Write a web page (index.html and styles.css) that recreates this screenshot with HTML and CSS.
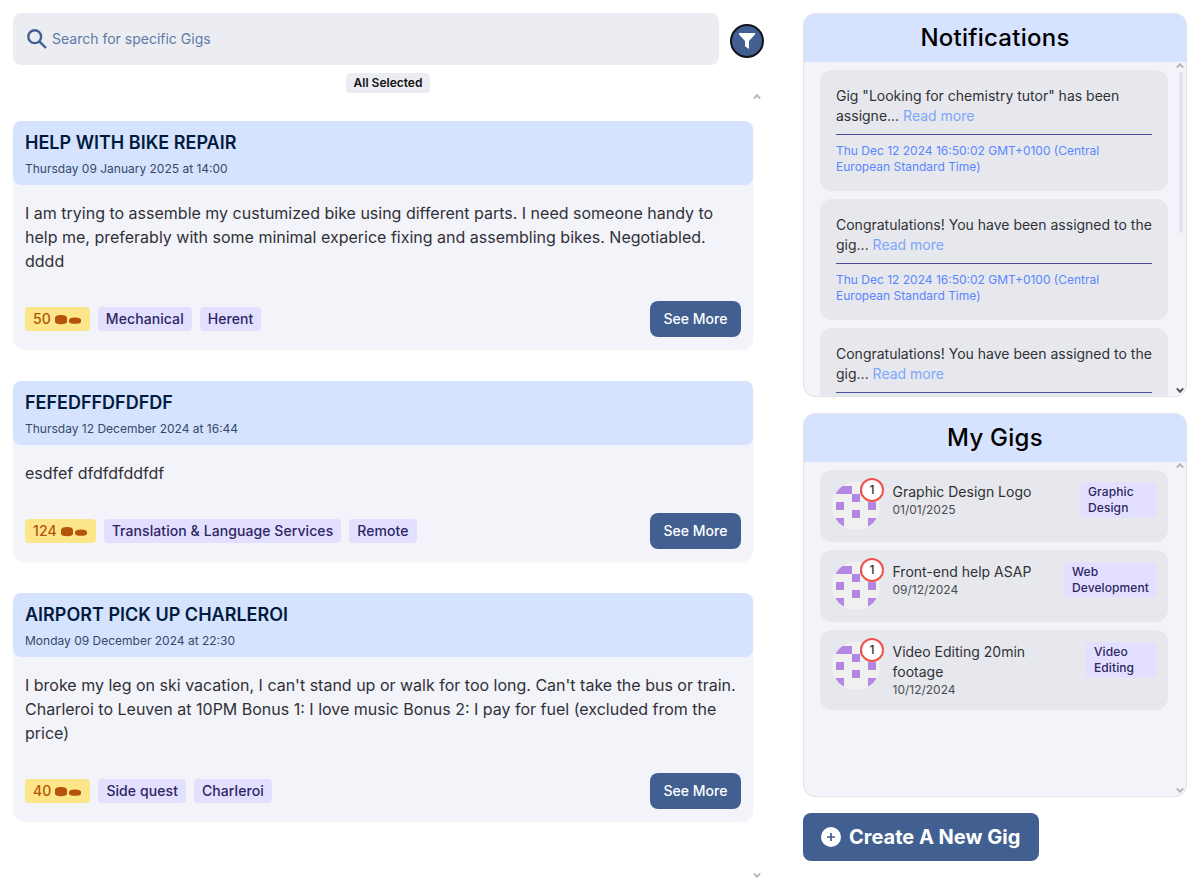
FILE: index.html
```html
<!DOCTYPE html>
<html lang="en">
<head>
<meta charset="utf-8">
<title>Gigs</title>
<link rel="stylesheet" href="styles.css">
</head>
<body>
<svg class="defs" aria-hidden="true">
  <symbol id="coins" viewBox="0 0 26 10">
    <path d="M0 3Q0 0 6 0T12 3V6.5Q12 9.3 6 9.3T0 6.5Z"/>
    <path d="M14 5.2Q14 2.6 20 2.6T26 5.2V6.2Q26 8.8 20 8.8T14 6.2Z"/>
  </symbol>
  <symbol id="avatar" viewBox="0 0 48 48">
    <clipPath id="round"><circle cx="24" cy="24" r="24"/></clipPath>
    <g clip-path="url(#round)">
      <path fill="#f0f0f0" d="M0 0H48V48H0Z"/>
      <path fill="#b388e3" d="M4 4H20V12H4ZM28 4H44V12H28ZM20 12H28V20H20ZM4 20H12V28H4ZM36 20H44V28H36ZM20 28H28V36H20ZM4 36H12V44H4ZM36 36H44V44H36Z"/>
    </g>
  </symbol>
  <symbol id="up" viewBox="0 0 8 7"><path d="M.8 5.6L4 2.2L7.2 5.6" fill="none" stroke="currentColor" stroke-width="2"/></symbol>
  <symbol id="down" viewBox="0 0 8 7"><path d="M.8 1.4L4 4.8L7.2 1.4" fill="none" stroke="currentColor" stroke-width="2"/></symbol>
</svg>
<div class="page">
  <main class="feed">
    <div class="toolbar">
      <label class="search">
        <svg viewBox="0 0 20 20"><circle cx="7.7" cy="7.7" r="6.4"/><path d="M12.3 12.3L19 19"/></svg>
        <span>Search for specific Gigs</span>
      </label>
      <button class="filter" aria-label="Filter"><svg viewBox="0 0 16 16"><path d="M0 0H16V1.6L10 8V16L6 13.3V8L0 1.6Z"/></svg></button>
    </div>
    <div class="selected"><span>All Selected</span></div>
    <div class="scroller">
      <div class="cards">
        <article class="card">
          <header><h2>HELP WITH BIKE REPAIR</h2><time>Thursday 09 January 2025 at 14:00</time></header>
          <p>I am trying to assemble my custumized bike using different parts. I need someone handy to<br>help me, preferably with some minimal experice fixing and assembling bikes. Negotiabled.<br>dddd</p>
          <footer><span class="tag price">50 <svg><use href="#coins"/></svg></span><span class="tag">Mechanical</span><span class="tag">Herent</span><button class="more">See More</button></footer>
        </article>
        <article class="card">
          <header><h2>FEFEDFFDFDFDF</h2><time>Thursday 12 December 2024 at 16:44</time></header>
          <p>esdfef dfdfdfddfdf</p>
          <footer><span class="tag price">124 <svg><use href="#coins"/></svg></span><span class="tag">Translation &amp; Language Services</span><span class="tag">Remote</span><button class="more">See More</button></footer>
        </article>
        <article class="card">
          <header><h2>AIRPORT PICK UP CHARLEROI</h2><time>Monday 09 December 2024 at 22:30</time></header>
          <p>I broke my leg on ski vacation, I can't stand up or walk for too long. Can't take the bus or train.<br>Charleroi to Leuven at 10PM Bonus 1: I love music Bonus 2: I pay for fuel (excluded from the<br>price)</p>
          <footer><span class="tag price">40 <svg><use href="#coins"/></svg></span><span class="tag">Side quest</span><span class="tag">Charleroi</span><button class="more">See More</button></footer>
        </article>
      </div>
      <div class="bar"><svg><use href="#up"/></svg><svg><use href="#down"/></svg></div>
    </div>
  </main>
  <aside class="side">
    <section class="panel">
      <h1>Notifications</h1>
      <div class="content">
        <div class="list">
          <div class="note"><p>Gig "Looking for chemistry tutor" has been<br>assigne... <a>Read more</a></p><time>Thu Dec 12 2024 16:50:02 GMT+0100 (Central<br>European Standard Time)</time></div>
          <div class="note"><p>Congratulations! You have been assigned to the<br>gig... <a>Read more</a></p><time>Thu Dec 12 2024 16:50:02 GMT+0100 (Central<br>European Standard Time)</time></div>
          <div class="note"><p>Congratulations! You have been assigned to the<br>gig... <a>Read more</a></p></div>
        </div>
        <div class="bar"><svg><use href="#up"/></svg><i class="thumb"></i><svg class="active"><use href="#down"/></svg></div>
      </div>
    </section>
    <section class="panel">
      <h1>My Gigs</h1>
      <div class="content">
        <div class="list">
          <div class="gig"><div class="avatar"><svg><use href="#avatar"/></svg><b>1</b></div><div class="info"><p>Graphic Design Logo</p><time>01/01/2025</time></div><span class="cat w1">Graphic<br>Design</span></div>
          <div class="gig"><div class="avatar"><svg><use href="#avatar"/></svg><b>1</b></div><div class="info"><p>Front-end help ASAP</p><time>09/12/2024</time></div><span class="cat w2">Web<br>Development</span></div>
          <div class="gig"><div class="avatar"><svg><use href="#avatar"/></svg><b>1</b></div><div class="info"><p>Video Editing 20min<br>footage</p><time>10/12/2024</time></div><span class="cat w3">Video<br>Editing</span></div>
        </div>
        <div class="bar"><svg><use href="#up"/></svg><svg><use href="#down"/></svg></div>
      </div>
    </section>
    <button class="create"><svg viewBox="0 0 20 20"><circle cx="10" cy="10" r="10"/><path d="M10 6V14M6 10H14"/></svg>Create A New Gig</button>
  </aside>
</div>
</body>
</html>
```
FILE: styles.css
```css
* { box-sizing: border-box; margin: 0; padding: 0; }
body { width: 1193px; height: 884px; overflow: hidden; background: #fff; font-family: Inter, sans-serif; font-weight: 400; color: #303136; }
button { border: 0; font-family: inherit; }
svg { display: block; flex: none; }
.defs { position: absolute; width: 0; height: 0; }
.page { display: flex; height: 884px; padding: 13px 6px 0 13px; gap: 38px; }
.feed { width: 752px; display: flex; flex-direction: column; }
.toolbar { display: flex; gap: 11px; height: 52px; }
.search { display: flex; align-items: center; width: 706px; border-radius: 8px; background: #ecedf3; padding-left: 14px; gap: 5px; font-size: 14px; line-height: 20px; color: #5c7aa4; }
.search svg { width: 20px; height: 20px; fill: none; stroke: #415f91; stroke-width: 2.4; }
.filter { width: 34px; height: 34px; margin-top: 11px; border: 2px solid #111318; border-radius: 50%; background: #415f91; display: flex; align-items: center; justify-content: center; }
.filter svg { width: 16px; height: 16px; fill: #fff; }
.selected { width: 750px; display: flex; justify-content: center; margin-top: 8px; }
.selected span { height: 20px; padding: 2px 8px; border-radius: 4px; background: #ecedf3; font-size: 12px; font-weight: 600; line-height: 16px; color: #111; }
.scroller { display: flex; height: 791px; }
.cards { width: 740px; padding-top: 28px; display: flex; flex-direction: column; gap: 32px; }
.bar { width: 12px; display: flex; flex-direction: column; align-items: center; color: #b9b9b9; }
.bar svg { width: 8px; height: 7px; }
.bar svg:last-child { margin-top: auto; }
.bar .active { color: #555; }
.scroller .bar { padding: 0 4px 5px 0; }
.card { background: #f3f3fa; border-radius: 12px; box-shadow: 0 1px 2px rgba(0,0,0,.05); padding-bottom: 12px; }
.card header { height: 64px; padding: 8px 12px; border-radius: 8px; background: #d6e3ff; }
.card h2 { font-size: 18px; line-height: 28px; font-weight: 600; color: #001b3e; }
.card time { display: block; margin-top: 4px; font-size: 12px; line-height: 16px; color: #34496a; }
.card p { padding: 16px 12px 28px; font-size: 16px; line-height: 24px; }
.card footer { display: flex; align-items: center; gap: 8px; padding: 0 12px; }
.tag { height: 24px; padding: 2px 8px; border-radius: 4px; background: #e3dfff; color: #2d2663; font-size: 14px; font-weight: 500; line-height: 20px; letter-spacing: .08px; white-space: nowrap; }
.price { display: flex; align-items: center; gap: 4px; background: #fde68a; color: #b45309; }
.price svg { width: 26px; height: 10px; fill: #b45309; margin: 2px 1px 0 0; }
.more { width: 91px; height: 36px; margin-left: auto; padding-bottom: 1px; border-radius: 8px; background: #415f91; color: #fff; font-size: 14px; font-weight: 500; }
.side { width: 384px; display: flex; flex-direction: column; gap: 16px; align-items: flex-start; }
.panel { width: 384px; height: 384px; border: 1px solid #e2e2e9; border-radius: 12px; background: #f3f3fa; overflow: hidden; display: flex; flex-direction: column; }
.panel h1 { height: 48px; flex: none; background: #d6e3ff; text-align: center; font-size: 24px; line-height: 48px; font-weight: 500; letter-spacing: .25px; color: #000; }
.content { display: flex; flex: 1; min-height: 0; }
.content .bar { padding: 0 0 2px; }
.thumb { width: 4px; height: 161px; margin: 3px 0 0 1px; background: #e1e2ec; border-radius: 2px; }
.list { flex: 1; padding: 8px 6px 0 16px; display: flex; flex-direction: column; gap: 8px; overflow: hidden; }
.note { flex: none; height: 121px; padding: 16px; border-radius: 12px; background: #e7e8ed; }
.note p { height: 49px; border-bottom: 1px solid #4a4b9c; font-size: 14px; line-height: 20px; white-space: nowrap; }
.note a { color: #7da5fb; }
.note time { display: block; margin-top: 8px; font-size: 12px; line-height: 16px; color: #5886ff; white-space: nowrap; }
.gig { display: flex; align-items: flex-start; padding: 12px; min-height: 72px; border-radius: 12px; background: #e7e8ed; }
.avatar { position: relative; width: 48px; height: 48px; }
.avatar svg { width: 48px; height: 48px; }
.avatar b { position: absolute; top: -4px; right: -4px; width: 24px; height: 24px; border: 2px solid #ef5350; border-radius: 50%; background: #fff; text-align: center; font-size: 12px; line-height: 20px; font-weight: 500; }
.info { margin-left: 12.5px; font-size: 14px; line-height: 20px; }
.info time { display: block; font-size: 12px; line-height: 16px; color: #4a4c53; }
.cat { margin-left: auto; height: 36px; padding: 2px 0 2px 8px; border-radius: 4px; background: #e3dfff; color: #2d2663; font-size: 12px; line-height: 16px; font-weight: 500; letter-spacing: .1px; }
.w1 { width: 76px; }
.w2 { width: 92px; }
.w3 { width: 70px; }
.create { width: 236px; height: 48px; border-radius: 8px; background: #415f91; color: #fff; display: flex; align-items: center; padding-left: 18px; gap: 8px; font-size: 20px; font-weight: 700; white-space: nowrap; }
.create svg { width: 20px; height: 20px; fill: #fff; stroke: #415f91; stroke-width: 1.7; }
.create circle { stroke: none; }
```
